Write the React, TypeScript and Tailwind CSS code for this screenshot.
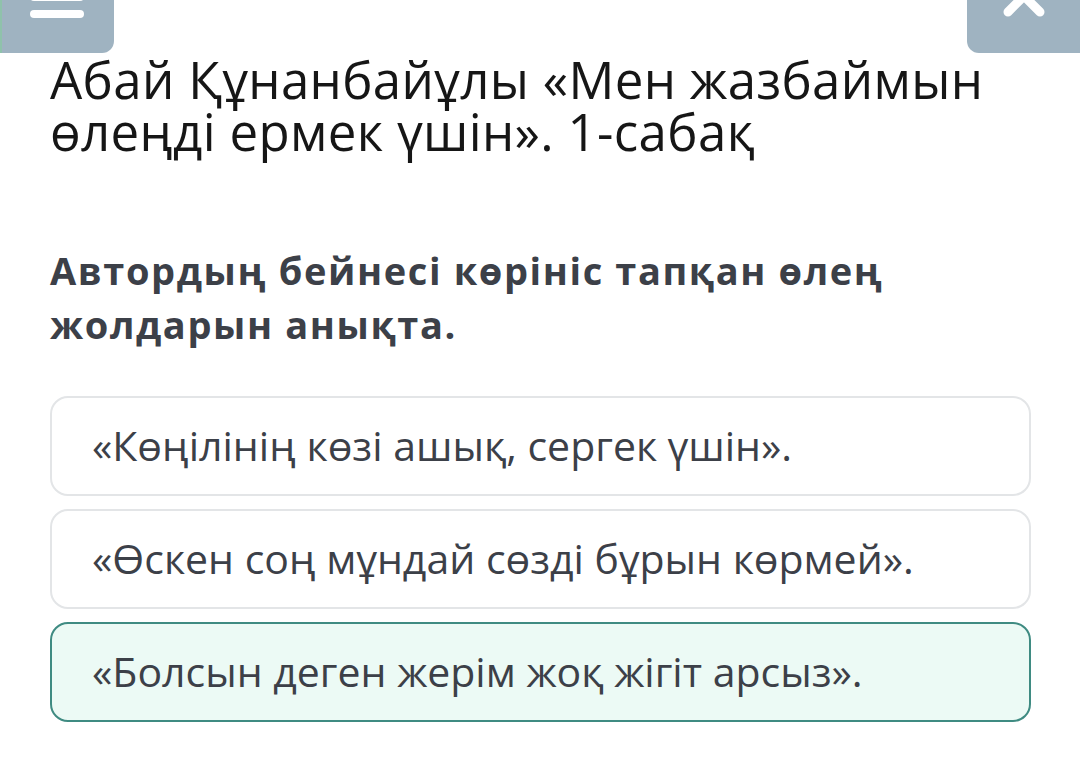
const options = [
  { text: "«Көңілінің көзі ашық, сергек үшін».", selected: false },
  { text: "«Өскен соң мұндай сөзді бұрын көрмей».", selected: false },
  { text: "«Болсын деген жерім жоқ жігіт арсыз».", selected: true },
];

function MenuButton() {
  return (
    <button className="h-[53px] w-[114px] overflow-hidden rounded-br-[12px] border-l-2 border-[#8fc2ab] bg-[#9fb3c1]">
      <svg width="112" height="53" viewBox="0 0 112 53">
        <rect x="28" y="-7" width="54" height="8" rx="4" fill="#fff" />
        <rect x="28" y="10" width="54" height="8" rx="4" fill="#fff" />
      </svg>
    </button>
  );
}

function CloseButton() {
  return (
    <button className="h-[53px] w-[113px] overflow-hidden rounded-bl-[12px] bg-[#9fb3c1]">
      <svg width="113" height="53" viewBox="0 0 113 53">
        <path d="M41 12 L57 -4 L73 12" stroke="#fff" strokeWidth="9" strokeLinecap="round" strokeLinejoin="round" fill="none" />
      </svg>
    </button>
  );
}

export default function App() {
  return (
    <div className="min-h-[766px] w-full bg-white font-['Open_Sans',sans-serif]">
      <div className="flex justify-between">
        <MenuButton />
        <CloseButton />
      </div>
      <div className="pl-[50px] pr-[49px]">
        <h1 className="text-[51px] leading-[52px] tracking-[0.35px] text-[#161616]">
          Абай Құнанбайұлы «Мен жазбаймын өлеңді ермек үшін». 1-сабақ
        </h1>
        <h2 className="mt-[86px] max-w-[880px] text-[38px] font-bold leading-[54px] tracking-[1.6px] text-[#3c4048]">
          Автордың бейнесі көрініс тапқан өлең жолдарын анықта.
        </h2>
        <div className="mt-[45px] flex flex-col gap-[13px]">
          {options.map((o) => (
            <div
              key={o.text}
              className={
                o.selected
                  ? "flex h-[100px] items-center rounded-[18px] border-2 border-[#3f8b82] bg-[#ecfaf5] pl-[40px] text-[41px] text-[#3c4048]"
                  : "flex h-[100px] items-center rounded-[18px] border-2 border-[#e3e5e7] bg-white pl-[40px] text-[41px] text-[#3c4048]"
              }
            >
              {o.text}
            </div>
          ))}
        </div>
      </div>
    </div>
  );
}
